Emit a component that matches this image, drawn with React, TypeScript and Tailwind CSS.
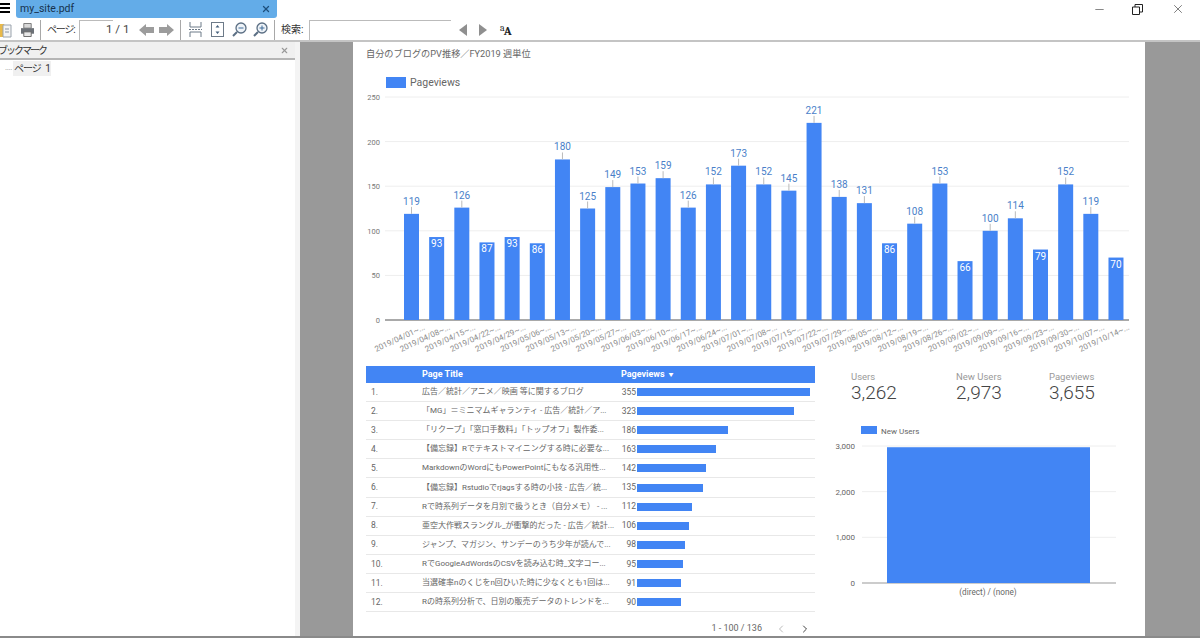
import React from 'react';
import { Minus, X, ChevronLeft, ChevronRight } from 'lucide-react';

const font = { fontFamily: 'Roboto, "Noto Sans CJK JP", sans-serif' };

const weeks = [
  '04/01', '04/08', '04/15', '04/22', '04/29', '05/06', '05/13', '05/20', '05/27', '06/03',
  '06/10', '06/17', '06/24', '07/01', '07/08', '07/15', '07/22', '07/29', '08/05', '08/12',
  '08/19', '08/26', '09/02', '09/09', '09/16', '09/23', '09/30', '10/07', '10/14',
];
const views = [
  119, 93, 126, 87, 93, 86, 180, 125, 149, 153, 159, 126, 152, 173, 152, 145, 221, 138, 131, 86,
  108, 153, 66, 100, 114, 79, 152, 119, 70,
];

const rows = [
  { title: '広告／統計／アニメ／映画 等に関するブログ', value: 355 },
  { title: '「MG」＝ミニマムギャランティ - 広告／統計／ア...', value: 323 },
  { title: '「リクープ」「窓口手数料」「トップオフ」製作委...', value: 186 },
  { title: '【備忘録】Rでテキストマイニングする時に必要な...', value: 163 },
  { title: 'MarkdownのWordにもPowerPointにもなる汎用性...', value: 142 },
  { title: '【備忘録】Rstudioでrjagsする時の小技 - 広告／統...', value: 135 },
  { title: 'Rで時系列データを月別で扱うとき（自分メモ） - ...', value: 112 },
  { title: '亜空大作戦スラングル_が衝撃的だった - 広告／統計...', value: 106 },
  { title: 'ジャンプ、マガジン、サンデーのうち少年が読んで...', value: 98 },
  { title: 'RでGoogleAdWordsのCSVを読み込む時_文字コー...', value: 95 },
  { title: '当選確率nのくじをn回ひいた時に少なくとも1回は...', value: 91 },
  { title: 'Rの時系列分析で、日別の販売データのトレンドを...', value: 90 },
];

const Separator = () => <div className="h-[20px] w-px bg-[#a8a8a8]" />;

const Toolbar = () => (
  <div className="flex h-[21px] shrink-0 items-center bg-white text-[10px] text-[#333]">
    <svg className="-ml-[3px] mr-[9px] shrink-0" width="15" height="16" viewBox="0 0 15 16">
      <path d="M0 2h7l1 2v11H0z" fill="#e9b949" />
      <path d="M6 3h8v12H6z" fill="#f4f4f4" stroke="#9aa3ad" />
      <path d="M8 7h4M8 10h4" stroke="#8a95a3" />
    </svg>
    <svg className="mr-[6px] shrink-0" width="13" height="14" viewBox="0 0 14 14">
      <path d="M3 0h8v5H3z" fill="#d8d8d8" stroke="#777" />
      <path d="M0 5h14v6H0z" fill="#6c7177" />
      <path d="M3 9h8v5H3z" fill="#e8e8e8" stroke="#666" />
    </svg>
    <Separator />
    <span className="ml-[6px] w-[32px] whitespace-nowrap tracking-[-1.2px]">ページ:</span>
    <div className="h-[20px] w-[34px] border-l border-t border-[#bbb]" />
    <span className="ml-[-7px] w-[30px] whitespace-nowrap text-[11.5px] text-[#444]">1 / 1</span>
    <svg className="ml-[3px] shrink-0" width="15" height="12" viewBox="0 0 15 12">
      <path d="M0 6l7-6v3h8v6H7v3z" fill="#9c9c9c" />
    </svg>
    <svg className="ml-[5px] shrink-0" width="15" height="12" viewBox="0 0 15 12">
      <path d="M15 6L8 0v3H0v6h8v3z" fill="#9c9c9c" />
    </svg>
    <div className="ml-[6px]">
      <Separator />
    </div>
    <svg className="ml-[8px] shrink-0" width="13" height="15" viewBox="0 0 13 15">
      <path d="M1 0v5h11V0M1 15v-5h11v5" fill="none" stroke="#6d7a88" />
      <path d="M0 7.5h13" stroke="#6d7a88" strokeDasharray="2 1" />
    </svg>
    <svg className="ml-[9px] shrink-0" width="13" height="15" viewBox="0 0 13 15">
      <rect x="0.5" y="0.5" width="12" height="14" fill="none" stroke="#6d7a88" />
      <path d="M6.5 3l2 2.5h-4zM6.5 12l2-2.5h-4z" fill="#44607c" />
    </svg>
    <svg className="ml-[8px] shrink-0" width="15" height="15" viewBox="0 0 15 15">
      <circle cx="9" cy="6" r="5" fill="#eef3f8" stroke="#5b6f84" strokeWidth="1.3" />
      <path d="M5 10l-4 4" stroke="#5b6f84" strokeWidth="2" />
      <path d="M6.5 6h5" stroke="#3f6b98" />
    </svg>
    <svg className="ml-[6px] shrink-0" width="15" height="15" viewBox="0 0 15 15">
      <circle cx="9" cy="6" r="5" fill="#eef3f8" stroke="#5b6f84" strokeWidth="1.3" />
      <path d="M5 10l-4 4" stroke="#5b6f84" strokeWidth="2" />
      <path d="M6.5 6h5M9 3.5v5" stroke="#3f6b98" />
    </svg>
    <div className="ml-[6px]">
      <Separator />
    </div>
    <span className="ml-[6px] w-[28px] whitespace-nowrap">検索:</span>
    <div className="h-[20px] w-[142px] border-l border-t border-[#bbb]" />
    <svg className="ml-[8px] shrink-0" width="8" height="12" viewBox="0 0 8 12">
      <path d="M8 0v12L0 6z" fill="#8f8f8f" />
    </svg>
    <svg className="ml-[12px] shrink-0" width="8" height="12" viewBox="0 0 8 12">
      <path d="M0 0v12l8-6z" fill="#8f8f8f" />
    </svg>
    <span className="ml-[13px] flex items-end font-serif leading-none text-[#222]">
      <span className="mb-[4px] text-[10px]">a</span>
      <span className="-ml-px text-[12px] font-bold">A</span>
    </span>
  </div>
);

const PageviewsChart = () => {
  const baseY = 259;
  const scale = 0.892;
  return (
    <svg className="block shrink-0" width="792" height="305" viewBox="0 0 792 305" style={font}>
      <rect x="33" y="16" width="20" height="11" fill="#4285f4" />
      <text x="57" y="25" fontSize="10.5" fill="#666">Pageviews</text>
      {[0, 50, 100, 150, 200, 250].map((tick) => {
        const y = baseY - tick * scale;
        return (
          <g key={tick}>
            <text x="27" y={y + 3} fontSize="7.5" fill="#777" textAnchor="end">{tick}</text>
            <line x1="32" x2="776" y1={y} y2={y} stroke={tick === 0 ? '#555' : '#eeeeee'} />
          </g>
        );
      })}
      {views.map((v, i) => {
        const cx = 58.5 + i * 25.16;
        const h = v * scale;
        return (
          <g key={i}>
            <rect x={cx - 7.5} y={baseY - h} width="15" height={h} fill="#4285f4" />
            {v <= 93 ? (
              <text x={cx} y={baseY - h + 10} fontSize="10" fill="#fff" textAnchor="middle">{v}</text>
            ) : (
              <>
                <line x1={cx} x2={cx} y1={baseY - h - 7} y2={baseY - h} stroke="#bbb" />
                <text x={cx} y={baseY - h - 9} fontSize="10" fill="#4a7fc9" textAnchor="middle">{v}</text>
              </>
            )}
            <text
              x={cx + 14}
              y={baseY + 9}
              fontSize="8"
              fill="#8c8c8c"
              textAnchor="end"
              transform={`rotate(-25 ${cx + 14} ${baseY + 9})`}
            >
              2019/{weeks[i]}~...
            </text>
          </g>
        );
      })}
    </svg>
  );
};

const PageTable = () => (
  <div className="w-[449px] shrink-0 text-[8px] text-[#666]">
    <div className="flex h-[17px] items-center bg-[#4285f4] text-[9px] font-bold text-white">
      <span className="ml-[56px] w-[199px]">Page Title</span>
      <span>Pageviews</span>
      <span className="ml-[4px] text-[5px]">▼</span>
    </div>
    {rows.map((row, i) => (
      <div key={i} className="flex h-[19.1px] items-center border-b border-[#e8e8e8]">
        <span className="ml-[5px] w-[51px] text-[8.5px]">{i + 1}.</span>
        <span className="w-[190px] whitespace-nowrap">{row.title}</span>
        <span className="w-[25px] pr-[1px] text-right text-[8.5px]">{row.value}</span>
        <div className="h-[8px] bg-[#4285f4]" style={{ width: row.value * 0.487 }} />
      </div>
    ))}
    <div className="mt-[10px] flex items-center justify-end text-[9px] text-[#666]">
      <span>1 - 100 / 136</span>
      <ChevronLeft className="ml-[13px] text-[#bbb]" size={12} />
      <ChevronRight className="ml-[12px] mr-[4px] text-[#444]" size={12} />
    </div>
  </div>
);

const Metric = ({ label, value, className }: { label: string; value: string; className: string }) => (
  <div className={className}>
    <div className="text-[9.5px] leading-[11px] text-[#999]">{label}</div>
    <div className="text-[19px] font-light leading-[22px] text-[#444]">{value}</div>
  </div>
);

const UsersChart = () => {
  const baseY = 157;
  const scale = 137 / 3000;
  return (
    <svg className="mt-[22px] block overflow-visible" width="300" height="180" viewBox="0 0 300 180" style={font}>
      <rect x="22" y="0" width="16" height="8" fill="#4285f4" />
      <text x="42" y="7.5" fontSize="8" fill="#666">New Users</text>
      {[0, 1000, 2000, 3000].map((tick) => {
        const y = baseY - tick * scale;
        return (
          <g key={tick}>
            <text x="16" y={y + 3} fontSize="8" fill="#666" textAnchor="end">{tick.toLocaleString('en-US')}</text>
            <line x1="23" x2="277" y1={y} y2={y} stroke={tick === 0 ? '#999' : '#eeeeee'} />
          </g>
        );
      })}
      <rect x="48" y={baseY - 2973 * scale} width="203" height={2973 * scale} fill="#4285f4" />
      <text x="149" y="169" fontSize="8.2" fill="#666" textAnchor="middle">(direct) / (none)</text>
    </svg>
  );
};

const App = () => {
  return (
    <div className="flex h-[638px] w-[1200px] flex-col overflow-hidden bg-white" style={font}>
      <div className="flex h-[19px] shrink-0 items-start bg-white">
        <div className="mt-[3px] flex w-[10px] flex-col gap-[2px]">
          <div className="h-[2px] bg-black" />
          <div className="h-[2px] bg-black" />
          <div className="h-[2px] bg-black" />
        </div>
        <div className="ml-[6px] flex h-[18px] w-[261px] items-center rounded-b-[3px] bg-[#63ace8] pl-[4px] pr-[6px] text-[10.5px] text-[#17324d]">
          <span className="flex-1">my_site.pdf</span>
          <X size={10} strokeWidth={3} className="text-[#1d4f7c]" />
        </div>
        <div className="ml-auto mt-[2px] flex items-center text-[#222]">
          <Minus size={13} strokeWidth={1} />
          <svg className="ml-[26px]" width="11" height="11" viewBox="0 0 11 11">
            <path d="M.5 3h7v7.5h-7zM3 3V.5h7.5V8H8" fill="none" stroke="#222" />
          </svg>
          <X className="ml-[28px] mr-[15px]" size={14} strokeWidth={1} />
        </div>
      </div>
      <Toolbar />
      <div className="flex min-h-0 flex-1 border-b-2 border-t-2 border-b-[#8a8a8a] border-t-[#c4c4c4]">
        <div className="w-[295px] shrink-0 text-[10px] text-[#333]">
          <div className="flex h-[18px] items-center justify-between overflow-hidden border-b-2 border-[#b5b5b5] bg-[#f0f0f0] pr-[6px]">
            <span className="-ml-[2px] whitespace-nowrap tracking-[-2px]">ブックマーク</span>
            <X size={9} strokeWidth={3} className="text-[#999]" />
          </div>
          <div className="mt-[1px] flex h-[14px] items-center pl-[5px]">
            <span className="w-[8px] text-[8px] tracking-tighter text-[#999]">....</span>
            <span className="whitespace-nowrap bg-[#f0f0f0] px-[1px] tracking-[-1px] [word-spacing:3px]">ページ 1</span>
          </div>
        </div>
        <div className="w-[5px] shrink-0 bg-[#f4f4f4]" />
        <div className="flex min-w-0 flex-1 justify-start overflow-hidden bg-[#999] pl-[53px]">
          <div className="flex h-full w-[792px] shrink-0 flex-col bg-white">
            <div className="ml-[13px] mt-[5px] h-[14px] shrink-0 text-[9.2px] leading-[14px] text-[#666]">
              自分のブログのPV推移／FY2019 週単位
            </div>
            <PageviewsChart />
            <div className="flex pl-[13px]">
              <PageTable />
              <div className="ml-[36px] flex-1">
                <div className="flex pt-[5px]">
                  <Metric label="Users" value="3,262" className="w-[105px]" />
                  <Metric label="New Users" value="2,973" className="w-[93px]" />
                  <Metric label="Pageviews" value="3,655" className="" />
                </div>
                <div className="-ml-[12px]">
                  <UsersChart />
                </div>
              </div>
            </div>
          </div>
        </div>
      </div>
    </div>
  );
};

export default App;
